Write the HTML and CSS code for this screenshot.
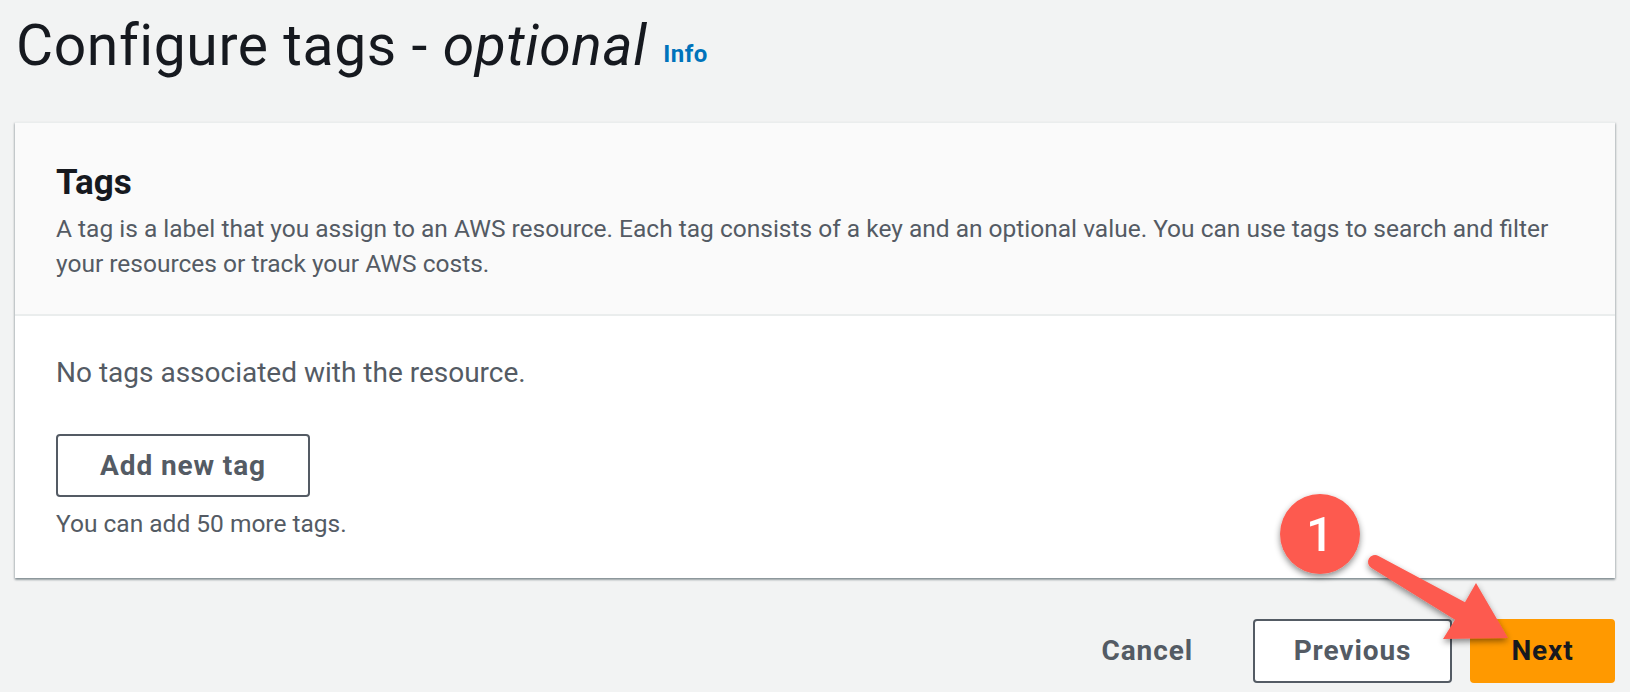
FILE: index.html
```html
<!DOCTYPE html>
<html lang="en">
<head>
<meta charset="utf-8">
<title>Configure tags - optional</title>
<link rel="stylesheet" href="styles.css">
</head>
<body>
<main class="page">
  <h1 class="page-title">Configure tags - <em>optional</em><a class="info" href="#">Info</a></h1>

  <section class="card">
    <header class="card-header">
      <h2 class="card-title">Tags</h2>
      <p class="card-desc">A tag is a label that you assign to an AWS resource. Each tag consists of a key and an optional value. You can use tags to search and filter your resources or track your AWS costs.</p>
    </header>
    <div class="card-body">
      <p class="empty">No tags associated with the resource.</p>
      <button class="btn btn-normal btn-add" type="button">Add new tag</button>
      <p class="hint">You can add 50 more tags.</p>
    </div>
  </section>

  <div class="actions">
    <button class="btn btn-link" type="button">Cancel</button>
    <button class="btn btn-normal btn-prev" type="button">Previous</button>
    <button class="btn btn-primary" type="button">Next</button>
  </div>

  <svg class="callout" width="280" height="212" viewBox="0 0 280 212" aria-hidden="true">
    <defs>
      <filter id="shadow" x="-30%" y="-30%" width="160%" height="170%">
        <feDropShadow dx="0" dy="3" stdDeviation="3" flood-color="#000" flood-opacity="0.45"/>
      </filter>
    </defs>
    <g filter="url(#shadow)">
      <circle cx="60" cy="54" r="40" fill="#fd5a4f"/>
      <text x="60" y="71" text-anchor="middle" class="callout-num">1</text>
    </g>
    <path filter="url(#shadow)" fill="#fd5a4f" d="M118.5 75.9 L205 122.3 L216 103 L248 158 L183 159 L195 139.7 L111.5 88.1 A7 7 0 0 1 118.5 75.9 Z"/>
  </svg>
</main>
</body>
</html>
```

FILE: styles.css
```css
html, body {
  margin: 0;
  padding: 0;
}

body {
  background: #f2f3f3;
  font-family: Roboto, "Liberation Sans", Arial, sans-serif;
  color: #545b64;
}

.page {
  position: relative;
  height: 692px;
  padding: 0 15px;
  box-sizing: border-box;
  overflow: hidden;
}

.page-title {
  margin: 11px 0 0 1px;
  height: 70px;
  font-size: 57px;
  line-height: 70px;
  font-weight: 400;
  color: #16191f;
  letter-spacing: 0.6px;
}

.page-title em {
  font-style: italic;
}

.info {
  margin-left: 16px;
  font-size: 24px;
  line-height: 24px;
  font-weight: 700;
  color: #0073bb;
  text-decoration: none;
  letter-spacing: 0.5px;
  vertical-align: 3px;
}

.card {
  margin-top: 41px;
  background: #fff;
  border-top: 1px solid #eaeded;
  box-shadow: 0 2px 2px rgba(0, 28, 36, 0.3), 1px 1px 2px rgba(0, 28, 36, 0.15), -1px 1px 2px rgba(0, 28, 36, 0.15);
}

.card-header {
  background: #fafafa;
  padding: 40px 41px 33px;
  border-bottom: 2px solid #eaeded;
}

.card-title {
  margin: 0;
  font-size: 35px;
  line-height: 40px;
  font-weight: 700;
  color: #16191f;
}

.card-desc {
  margin: 8px 0 0;
  font-size: 24.5px;
  line-height: 35px;
  color: #545b64;
}

.card-body {
  padding: 39px 41px 37px;
}

.empty {
  margin: 0;
  font-size: 28px;
  line-height: 35px;
  color: #545b64;
}

.btn {
  font-family: inherit;
  font-weight: 700;
  font-size: 28px;
  line-height: 32px;
  letter-spacing: 0.9px;
  border-radius: 4px;
  cursor: pointer;
  box-sizing: border-box;
  height: 64px;
  padding: 0 40px;
}

.btn-normal {
  background: #fff;
  color: #545b64;
  border: 2px solid #545b64;
}

.btn-add {
  display: block;
  margin-top: 44px;
  width: 254px;
  height: 63px;
  padding: 0;
}

.hint {
  margin: 9px 0 0;
  font-size: 24.5px;
  line-height: 35px;
  color: #545b64;
}

.actions {
  display: flex;
  justify-content: flex-end;
  gap: 18px;
  margin-top: 41px;
}

.btn-link {
  background: transparent;
  border: 2px solid transparent;
  color: #545b64;
}

.btn-prev {
  width: 199px;
  padding: 0;
}

.btn-primary {
  background: #ff9900;
  border: 2px solid #ff9900;
  color: #16191f;
  width: 145px;
  padding: 0;
}

.callout {
  position: absolute;
  left: 1260px;
  top: 480px;
  overflow: visible;
}

.callout-num {
  font-family: Roboto, "Liberation Sans", Arial, sans-serif;
  font-size: 49px;
  font-weight: 500;
  fill: #fff;
}
```
